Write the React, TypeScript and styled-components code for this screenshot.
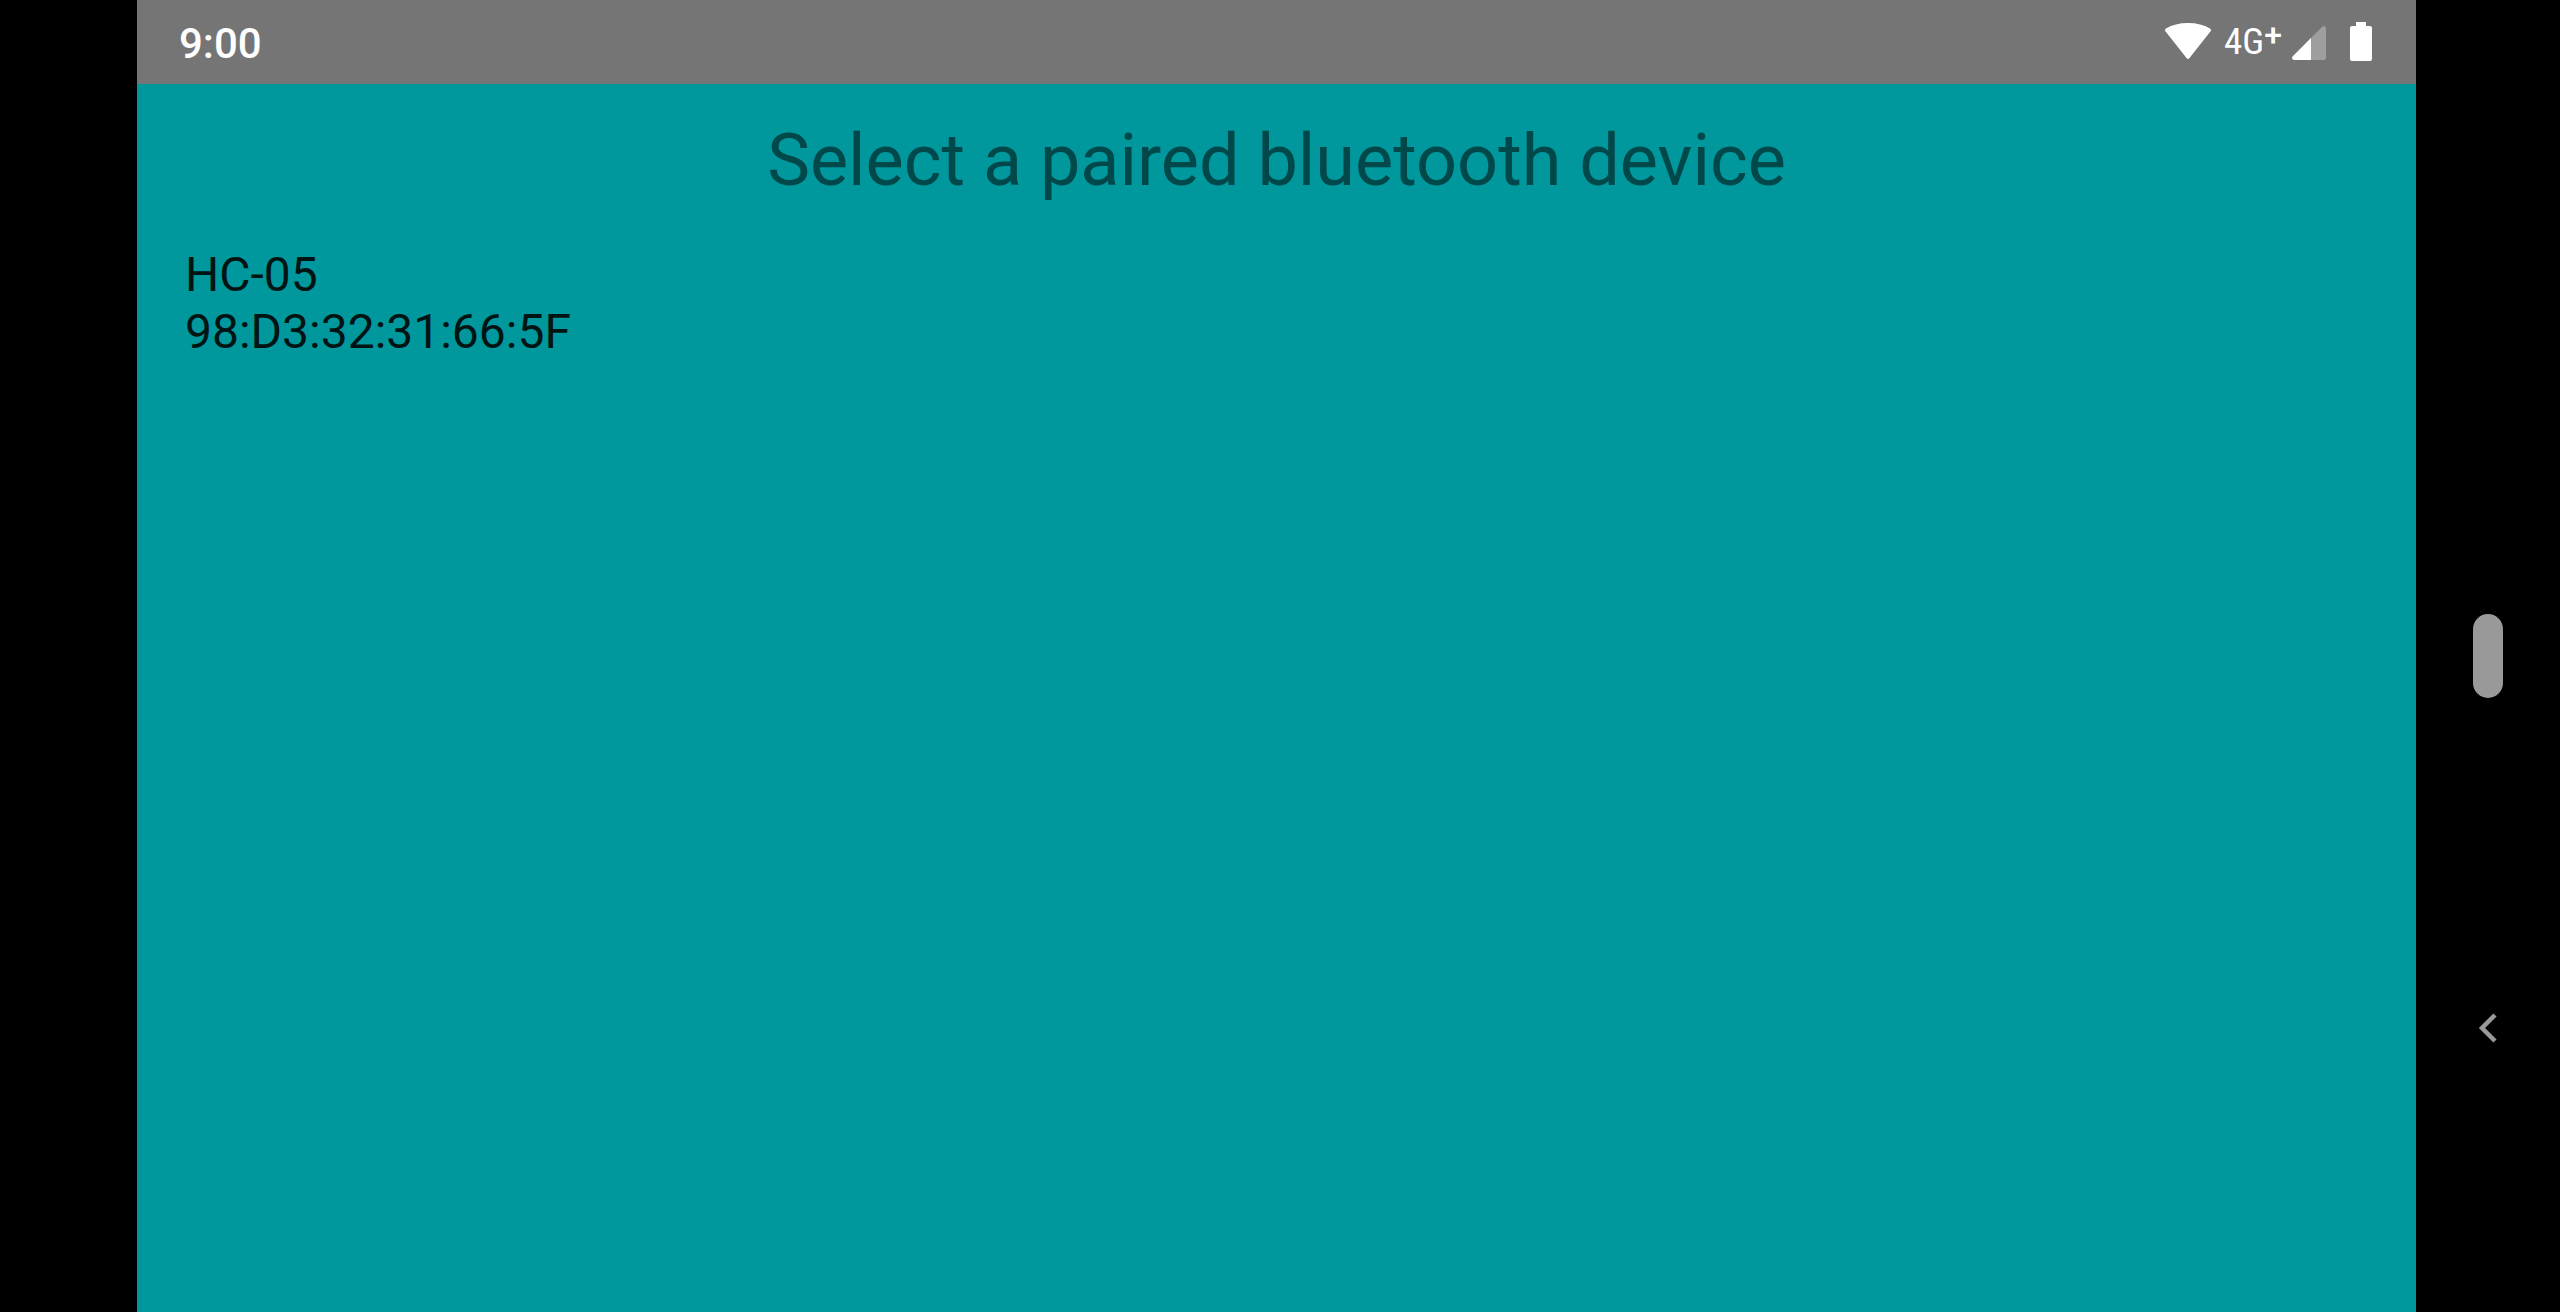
import React from "react";
import styled, { createGlobalStyle } from "styled-components";

const GlobalStyle = createGlobalStyle`
  * { box-sizing: border-box; }
  body { margin: 0; background: #000; font-family: Roboto, sans-serif; }
`;

const Device = styled.div`
  display: grid;
  grid-template-columns: 137px minmax(0, 1fr) 144px;
  min-height: 100vh;
  background: #000;
`;

const Screen = styled.div`
  grid-column: 2;
  display: flex;
  flex-direction: column;
  background: #00989d;
`;

const StatusBar = styled.header`
  display: flex;
  align-items: center;
  justify-content: space-between;
  height: 84px;
  padding: 0 44px 0 42px;
  background: #757575;
  color: #fff;
`;

const Clock = styled.time`
  padding-top: 4px;
  font-size: 42px;
  font-weight: 500;
  line-height: 48px;
`;

const StatusIcons = styled.div`
  display: flex;
  align-items: center;
`;

const StatusIcon = styled.svg`
  display: block;
  height: 40px;
`;

const Network = styled.span`
  display: flex;
  width: 58px;
  margin: 0 10px 0 13px;
  font-family: "Roboto Condensed", Roboto, sans-serif;
  font-size: 37px;
  line-height: 44px;
`;

const Plus = styled.span`
  font-family: Roboto, sans-serif;
  font-size: 32px;
  font-weight: 500;
  line-height: 30px;
`;

const Battery = styled(StatusIcon)`
  margin-left: 24px;
`;

const Title = styled.h1`
  margin: 0;
  padding: 33px 0 31px;
  font-size: 72px;
  font-weight: 400;
  line-height: 88px;
  text-align: center;
  color: #00484a;
`;

const DeviceList = styled.ul`
  margin: 0;
  padding: 0;
  list-style: none;
`;

const DeviceButton = styled.button`
  display: block;
  width: 100%;
  padding: 10px 48px;
  border: 0;
  background: transparent;
  font: 400 48px/57px Roboto, sans-serif;
  text-align: left;
  color: #001414;
`;

const Line = styled.span`
  display: block;
`;

const NavBar = styled.nav`
  display: flex;
  flex-direction: column;
  align-items: center;
  justify-content: center;
`;

const NavSlot = styled.div`
  display: flex;
  height: 372px;
  align-items: center;
`;

const NavButton = styled.button`
  display: flex;
  padding: 0;
  border: 0;
  background: transparent;
`;

const HomePill = styled.span`
  width: 30px;
  height: 84px;
  border-radius: 15px;
  background: #999;
`;

export default function App() {
  return (
    <>
      <GlobalStyle />
      <Device>
        <Screen>
          <StatusBar>
            <Clock>9:00</Clock>
            <StatusIcons>
              <StatusIcon width="46" viewBox="0 0 46 40" aria-hidden="true">
                <path
                  d="M1 10Q-1 8 1 6.500Q10 1 23 1T45 6.500Q47 8 45 10L24.500 36Q23 38 21.500 36Z"
                  fill="#fff"
                />
              </StatusIcon>
              <Network>
                4G<Plus>+</Plus>
              </Network>
              <StatusIcon width="34" viewBox="0 0 34 40" aria-hidden="true">
                <path
                  d="M2 38Q-1 37 .6 34.500L30.500 4.600Q33 3 34 6V36Q34 38 32 38Z"
                  fill="#9e9e9e"
                />
                <path d="M19 16V38H2Q-1 37 .6 34.500Z" fill="#fff" />
              </StatusIcon>
              <Battery width="22" viewBox="0 0 22 40" aria-hidden="true">
                <path
                  d="M6 0H16V4H20Q22 4 22 6V37Q22 39 20 39H2Q0 39 0 37V6Q0 4 2 4H6Z"
                  fill="#fff"
                />
              </Battery>
            </StatusIcons>
          </StatusBar>
          <main>
            <Title>Select a paired bluetooth device</Title>
            <DeviceList>
              <li>
                <DeviceButton>
                  <Line>HC-05</Line>
                  <Line>98:D3:32:31:66:5F</Line>
                </DeviceButton>
              </li>
            </DeviceList>
          </main>
        </Screen>
        <NavBar aria-label="System navigation">
          <NavSlot />
          <NavSlot>
            <NavButton aria-label="Home">
              <HomePill />
            </NavButton>
          </NavSlot>
          <NavSlot>
            <NavButton aria-label="Back">
              <svg width="20" height="30" viewBox="0 0 20 30" aria-hidden="true">
                <path d="M17 2 4 15l13 13" fill="none" stroke="#999" strokeWidth="4.500" />
              </svg>
            </NavButton>
          </NavSlot>
        </NavBar>
      </Device>
    </>
  );
}
